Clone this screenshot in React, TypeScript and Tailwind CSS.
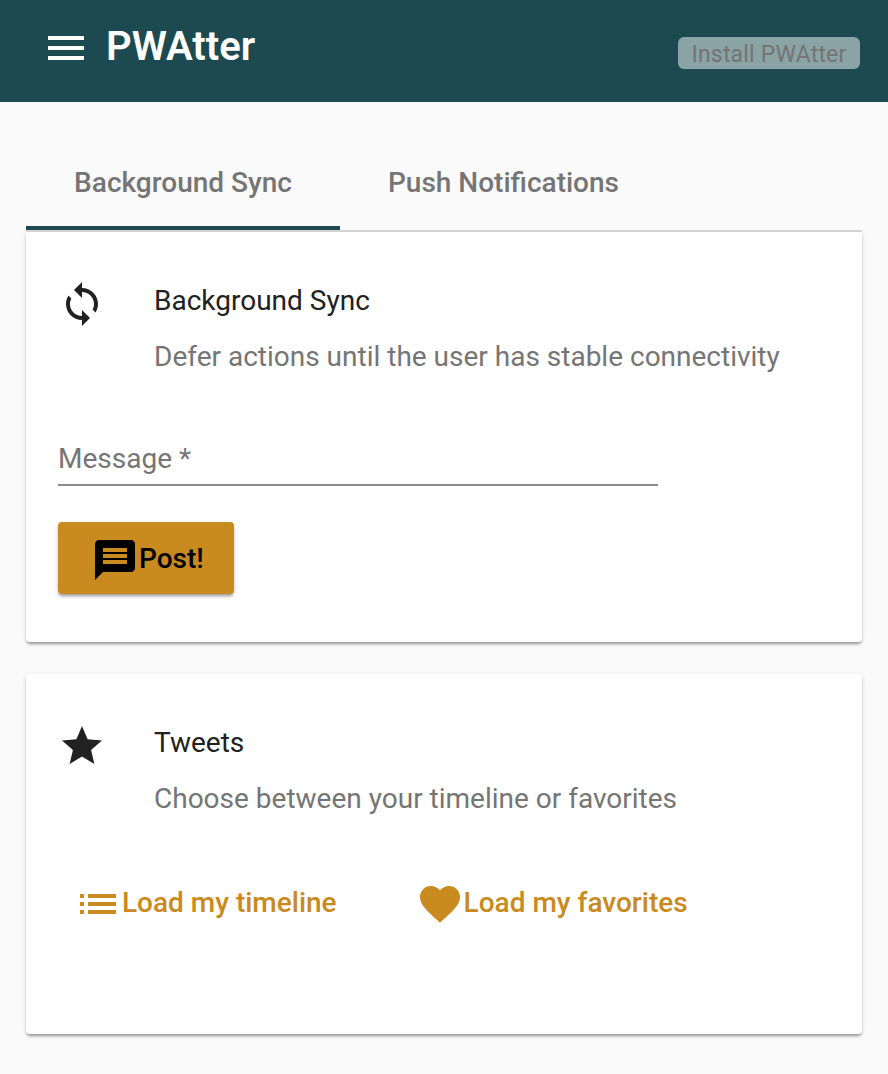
const Icon = ({ d, className }: { d: string; className: string }) => (
  <svg viewBox="0 0 24 24" fill="currentColor" className={className}>
    <path d={d} />
  </svg>
);

const menu = "M3 18h18v-2H3v2zm0-5h18v-2H3v2zm0-7v2h18V6H3z";
const sync = "M12 4V1L8 5l4 4V6c3.31 0 6 2.69 6 6 0 1.01-.25 1.97-.7 2.8l1.46 1.46C19.54 15.03 20 13.57 20 12c0-4.42-3.58-8-8-8zm0 14c-3.31 0-6-2.69-6-6 0-1.01.25-1.97.7-2.8L5.24 7.74C4.46 8.97 4 10.43 4 12c0 4.42 3.58 8 8 8v3l4-4-4-4v3z";
const message = "M20 2H4c-1.1 0-1.99.9-1.99 2L2 22l4-4h14c1.1 0 2-.9 2-2V4c0-1.1-.9-2-2-2zm-2 12H6v-2h12v2zm0-3H6V9h12v2zm0-3H6V6h12v2z";
const list = "M3 13h2v-2H3v2zm0 4h2v-2H3v2zm0-8h2V7H3v2zm4 4h14v-2H7v2zm0 4h14v-2H7v2zM7 7v2h14V7H7z";
const heart = "M12 21.35l-1.45-1.32C5.4 15.36 2 12.28 2 8.5 2 5.42 4.42 3 7.5 3c1.74 0 3.41.81 4.5 2.09C13.09 3.81 14.76 3 16.5 3 19.58 3 22 5.42 22 8.5c0 3.78-3.4 6.86-8.55 11.54L12 21.35z";
const star = "M12 17.27L18.18 21l-1.64-7.03L22 9.24l-7.19-.61L12 2 9.19 8.63 2 9.24l5.46 4.73L5.82 21z";

const CardHeader = ({ icon, title, sub }: { icon: string; title: string; sub: string }) => (
  <div className="flex">
    <div className="w-[96px] pl-[32px] pt-[48px]">
      <Icon d={icon} className="w-[48px] h-[48px] text-[#212121]" />
    </div>
    <div className="pl-[32px] pt-[50px]">
      <div className="text-[28px] leading-[38px] text-[#212121]">{title}</div>
      <div className="mt-[18px] text-[28px] leading-[38px] text-[#757575]">{sub}</div>
    </div>
  </div>
);

export default function App() {
  return (
    <div className="w-[888px] h-[1074px] bg-[#fafafa] overflow-hidden font-['Roboto',sans-serif]">
      <header className="h-[102px] bg-[#1c4a50] flex items-start pl-[42px] pr-[28px]">
        <Icon d={menu} className="w-[48px] h-[48px] mt-[24px] text-white" />
        <div className="ml-[16px] mt-[23px] text-[40px] leading-[48px] font-semibold text-white">PWAtter</div>
        <button className="ml-auto mt-[37px] h-[32px] w-[182px] rounded-[6px] bg-[#8aa3a5] pt-[2px] text-[23px] leading-[32px] tracking-[0.2px] text-[#747474] text-center">
          Install PWAtter
        </button>
      </header>
      <main className="px-[26px] pt-[32px]">
        <div className="flex h-[98px] border-b-2 border-[#d9d9d9]">
          <div className="w-[314px] h-[96px] border-b-4 border-[#1c4a50] flex items-center justify-center pt-[6px] text-[28px] font-medium text-[#757575]">
            Background Sync
          </div>
          <div className="w-[327px] h-[96px] flex items-center justify-center pt-[2px] text-[28px] font-medium text-[#757575]">
            Push Notifications
          </div>
        </div>
        <section className="h-[410px] bg-white rounded-b-[4px] shadow-[0_3px_3px_-1px_rgba(0,0,0,0.35),0_1px_5px_rgba(0,0,0,0.12)]">
          <CardHeader icon={sync} title="Background Sync" sub="Defer actions until the user has stable connectivity" />
          <div className="ml-[32px] mt-[62px] w-[600px] h-[48px] border-b-2 border-[#8c8c8c] text-[28px] leading-[42px] text-[#757575]">
            Message *
          </div>
          <button className="ml-[32px] mt-[36px] w-[176px] h-[72px] rounded-[4px] bg-[#c98a20] flex items-center pl-[33px] text-[28px] font-medium text-black shadow-[0_3px_3px_-1px_rgba(0,0,0,0.3),0_2px_5px_rgba(0,0,0,0.15)]">
            <Icon d={message} className="w-[48px] h-[48px] shrink-0 mt-[4px]" />
            <span className="mt-[2px]">Post!</span>
          </button>
        </section>
        <section className="mt-[32px] h-[360px] bg-white rounded-[4px] shadow-[0_3px_3px_-1px_rgba(0,0,0,0.35),0_1px_5px_rgba(0,0,0,0.12)]">
          <CardHeader icon={star} title="Tweets" sub="Choose between your timeline or favorites" />
          <div className="flex ml-[48px] mt-[62px] text-[28px] font-medium text-[#c98a20]">
            <div className="flex items-center">
              <Icon d={list} className="w-[48px] h-[48px] shrink-0" />
              <span className="mb-[2px]">Load my timeline</span>
            </div>
            <div className="flex items-center ml-[79px]">
              <Icon d={heart} className="w-[48px] h-[48px] shrink-0" />
              <span className="mb-[2px]">Load my favorites</span>
            </div>
          </div>
        </section>
      </main>
    </div>
  );
}
